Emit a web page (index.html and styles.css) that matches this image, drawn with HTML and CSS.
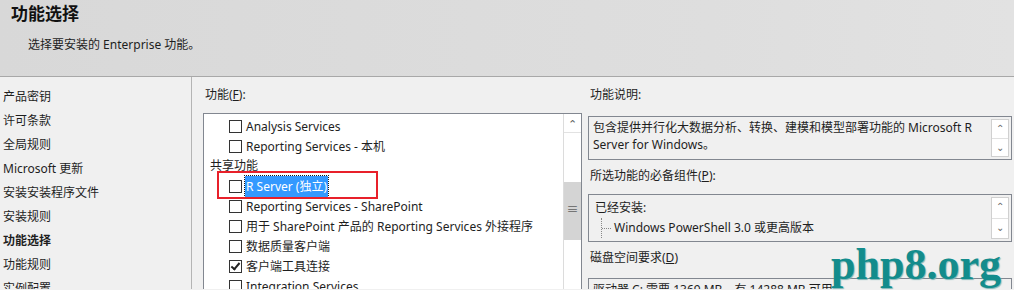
FILE: index.html
```html
<!DOCTYPE html>
<html lang="zh-CN">
<head>
  <meta charset="UTF-8" />
  <title>功能选择</title>
  <link rel="stylesheet" href="styles.css">
</head>
<body>

  <header class="top">
    <h1>功能选择</h1>
    <p>选择要安装的 Enterprise 功能。</p>
  </header>

  <div class="main">
    <!-- Кроки майстра -->
    <nav class="steps">
      <div>产品密钥</div>
      <div>许可条款</div>
      <div>全局规则</div>
      <div>Microsoft 更新</div>
      <div>安装安装程序文件</div>
      <div>安装规则</div>
      <div class="current">功能选择</div>
      <div>功能规则</div>
      <div>实例配置</div>
    </nav>

    <section class="features">
      <div class="label">功能(<u>F</u>):</div>
      <div class="list-box">
        <div class="list">
          <div class="row"><span class="chk"></span>Analysis Services</div>
          <div class="row"><span class="chk"></span>Reporting Services - 本机</div>
          <div class="group">共享功能</div>
          <div class="row marked"><span class="chk"></span><span class="sel">R Server (独立)</span></div>
          <div class="row"><span class="chk"></span>Reporting Services - SharePoint</div>
          <div class="row"><span class="chk"></span>用于 SharePoint 产品的 Reporting Services 外接程序</div>
          <div class="row"><span class="chk"></span>数据质量客户端</div>
          <div class="row"><span class="chk on"></span>客户端工具连接</div>
          <div class="row"><span class="chk"></span>Integration Services</div>
        </div>
        <div class="vscroll">
          <div class="arrow">&#8963;</div>
          <div class="track"><div class="thumb">&#8801;</div></div>
        </div>
      </div>
    </section>

    <section class="details">
      <div class="label">功能说明:</div>
      <div class="info-box desc">
        <div class="info-text">包含提供并行化大数据分析、转换、建模和模型部署功能的 Microsoft R Server for Windows。</div>
        <div class="mini-scroll"><span>&#8963;</span><span>&#8964;</span></div>
      </div>

      <div class="label">所选功能的必备组件(<u>P</u>):</div>
      <div class="info-box prereq">
        <div class="info-text">
          <div>已经安装:</div>
          <div class="tree">Windows PowerShell 3.0 或更高版本</div>
        </div>
        <div class="mini-scroll"><span>&#8963;</span><span>&#8964;</span></div>
      </div>

      <div class="label">磁盘空间要求(<u>D</u>)</div>
      <div class="info-box disk">
        <div class="info-text">驱动器 C: 需要 1369 MB，有 14288 MB 可用</div>
      </div>
    </section>
  </div>

  <div class="watermark">php8.org</div>

</body>
</html>
```

FILE: styles.css
```css
body {
  margin: 0;
  width: 1014px;
  height: 290px;
  overflow: hidden;
  background-color: #f0f0f0;
  color: #1e1e1e;
  font-family: 'Noto Sans', 'Noto Sans CJK SC', sans-serif;
  font-size: 12px;
  position: relative;
}

.top {
  height: 77px;
  box-sizing: border-box;
  padding: 3px 0 0 11px;
  background: linear-gradient(to right, #d8d8d8, #dedede 70%, #e2e2e2);
  border-bottom: 1px solid #a8a8a8;
}

.top h1 {
  margin: 0;
  font-size: 17px;
  line-height: 22px;
  font-weight: 700;
  color: #111;
}

.top p {
  margin: 12px 0 0 17px;
  line-height: 16px;
}

.main {
  display: flex;
  height: 212px;
  overflow: hidden;
}

/* Кроки зліва */
.steps {
  width: 192px;
  border-right: 1px solid #b4b4b4;
  padding: 12px 0 0 3px;
  box-sizing: border-box;
  flex-shrink: 0;
}

.steps div {
  height: 24px;
  line-height: 16px;
  white-space: nowrap;
}

.steps .current {
  font-weight: 700;
}

.label {
  line-height: 16px;
  height: 16px;
}

.label u {
  text-decoration: underline;
}

/* Список функцій */
.features {
  padding: 10px 0 0 11px;
  width: 390px;
  box-sizing: border-box;
}

.features .label {
  padding-left: 2px;
  margin-bottom: 10px;
}

.list-box {
  display: flex;
  width: 379px;
  height: 200px;
  background: white;
  border: 1px solid #828790;
  box-sizing: border-box;
}

.list {
  flex-grow: 1;
  padding-top: 2px;
  overflow: hidden;
}

.row {
  height: 20px;
  display: flex;
  align-items: center;
  padding-left: 25px;
  white-space: nowrap;
}

.chk {
  width: 11px;
  height: 11px;
  border: 1px solid #333;
  background: white;
  margin-right: 4px;
  flex-shrink: 0;
  position: relative;
}

.chk.on::after {
  content: "";
  position: absolute;
  left: 3px;
  top: 0;
  width: 3px;
  height: 7px;
  border: solid #222;
  border-width: 0 2px 2px 0;
  transform: rotate(40deg);
}

.group {
  height: 20px;
  line-height: 20px;
  padding-left: 6px;
}

.row.marked {
  position: relative;
}

.row.marked::before {
  content: "";
  position: absolute;
  left: 13px;
  top: -5px;
  width: 157px;
  height: 24px;
  border: 2px solid #e8202a;
}

.sel {
  background: #3399ff;
  color: white;
  padding: 1px 1px 2px;
  margin-left: -1px;
  outline: 1px dotted #1a1a1a;
}

.vscroll {
  width: 17px;
  border-left: 1px solid #dcdcdc;
  display: flex;
  flex-direction: column;
  flex-shrink: 0;
}

.arrow {
  height: 18px;
  text-align: center;
  line-height: 20px;
  color: #606060;
  font-size: 11px;
  border-bottom: 1px solid #e2e2e2;
}

.track {
  flex-grow: 1;
  padding-top: 49px;
}

.thumb {
  height: 58px;
  background: #d4d4d4;
  text-align: center;
  line-height: 56px;
  color: #606060;
  font-size: 12px;
}

/* Правий блок */
.details {
  flex-grow: 1;
  padding: 10px 2px 0 6px;
  box-sizing: border-box;
}

.details .label {
  padding-left: 2px;
}

.info-box {
  display: flex;
  border: 1px solid #828790;
  box-sizing: border-box;
  margin-bottom: 8px;
}

.info-box.desc {
  height: 44px;
  margin-top: 13px;
}

.info-box.prereq {
  height: 48px;
  margin-top: 10px;
}

.info-box.disk {
  height: 40px;
  margin-top: 12px;
}

.info-text {
  flex-grow: 1;
  padding: 2px 0 0 4px;
  line-height: 17px;
}

.prereq .info-text {
  padding: 3px 0 0 6px;
  line-height: 20px;
}

.tree {
  margin-left: 6px;
  padding-left: 12px;
  border-left: 1px dotted #888;
  position: relative;
}

.tree::before {
  content: "";
  position: absolute;
  left: 0;
  top: 10px;
  width: 9px;
  border-top: 1px dotted #888;
}

.mini-scroll {
  width: 16px;
  margin: 2px 2px 2px 0;
  border: 1px solid #d0d0d0;
  background: white;
  display: flex;
  flex-direction: column;
  flex-shrink: 0;
}

.mini-scroll span {
  flex-grow: 1;
  text-align: center;
  color: #6a6a6a;
  font-size: 10px;
  line-height: 17px;
}

.mini-scroll span + span {
  border-top: 1px solid #e0e0e0;
}

.watermark {
  position: absolute;
  left: 831px;
  top: 243px;
  font-family: 'Liberation Serif', serif;
  font-weight: 700;
  font-size: 44px;
  line-height: 44px;
  color: #138c8c;
  text-shadow: 1px 1px 1px #7fb6b6;
}
```
